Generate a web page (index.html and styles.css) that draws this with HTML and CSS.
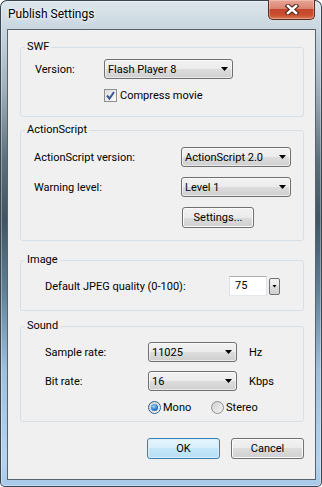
FILE: index.html
```html
<!DOCTYPE html>
<html lang="en">
<head>
    <meta charset="UTF-8">
    <title>Publish Settings</title>
    <link rel="stylesheet" href="styles.css">
</head>
<body>
    <div class="window">
        <!-- Title bar -->
        <div class="titlebar">
            <span class="title">Publish Settings</span>
            <button class="close" aria-label="Close">
                <svg width="14" height="11" viewBox="0 0 14 11">
                    <path d="M3 2 L11 9 M11 2 L3 9" stroke="#4b2218" stroke-width="4.6" stroke-linecap="square" fill="none"/>
                    <path d="M3 2 L11 9 M11 2 L3 9" stroke="#fff" stroke-width="2.6" stroke-linecap="square" fill="none"/>
                </svg>
            </button>
        </div>

        <div class="client">
            <!-- SWF -->
            <fieldset class="group swf">
                <legend>SWF</legend>
                <div class="group-body">
                    <div class="row">
                        <span class="lbl">Version:</span>
                        <div class="combo">Flash Player 8</div>
                    </div>
                    <div class="row check-row">
                        <span class="checkbox">
                            <svg width="11" height="11" viewBox="0 0 11 11">
                                <path d="M2 5.5 L4.5 8.5 L9 2" stroke="#3d5593" stroke-width="2" fill="none"/>
                            </svg>
                        </span>
                        Compress movie
                    </div>
                </div>
            </fieldset>

            <!-- ActionScript -->
            <fieldset class="group as">
                <legend>ActionScript</legend>
                <div class="group-body">
                    <div class="row">
                        <span class="lbl">ActionScript version:</span>
                        <div class="combo">ActionScript 2.0</div>
                    </div>
                    <div class="row">
                        <span class="lbl">Warning level:</span>
                        <div class="combo">Level 1</div>
                    </div>
                    <div class="row">
                        <button class="btn settings">Settings...</button>
                    </div>
                </div>
            </fieldset>

            <!-- Image -->
            <fieldset class="group image">
                <legend>Image</legend>
                <div class="group-body">
                    <div class="row">
                        <span class="lbl">Default JPEG quality (0-100):</span>
                        <div class="field">75</div>
                        <span class="spin"></span>
                    </div>
                </div>
            </fieldset>

            <!-- Sound -->
            <fieldset class="group sound">
                <legend>Sound</legend>
                <div class="group-body">
                    <div class="row">
                        <span class="lbl">Sample rate:</span>
                        <div class="combo">11025</div>
                        <span class="unit">Hz</span>
                    </div>
                    <div class="row">
                        <span class="lbl">Bit rate:</span>
                        <div class="combo">16</div>
                        <span class="unit">Kbps</span>
                    </div>
                    <div class="row radio-row">
                        <span class="option"><span class="radio checked"></span>Mono</span>
                        <span class="option"><span class="radio"></span>Stereo</span>
                    </div>
                </div>
            </fieldset>

            <div class="actions">
                <button class="btn default">OK</button>
                <button class="btn">Cancel</button>
            </div>
        </div>
    </div>
</body>
</html>
```

FILE: styles.css
```css
/* Reset */
* {
    margin: 0;
    padding: 0;
    box-sizing: border-box;
}

body {
    width: 322px;
    height: 487px;
    overflow: hidden;
    font-family: Roboto, "Noto Sans", sans-serif;
    font-size: 11px;
    color: #000;
}

/* Aero frame */
.window {
    width: 322px;
    height: 487px;
    display: flex;
    flex-direction: column;
    border-radius: 7px 7px 5px 5px;
    background: linear-gradient(180deg, #dde6ec 0, #c9d6df 29px, #9fb0bb 90px, #5b707d 160px, #3f5563 220px, #5f7f96 290px, #9ec0de 370px, #b5d3ef 460px, #a9c9e9 487px);
    box-shadow: inset 0 0 0 1px #3b4750, inset 0 0 0 2px rgba(255, 255, 255, 0.35);
}

.titlebar {
    height: 29px;
    display: flex;
    justify-content: space-between;
    align-items: flex-start;
    padding: 0 7px 0 8px;
}

.title {
    margin-top: 6px;
    font-size: 12px;
    line-height: 16px;
    text-shadow: 0 0 6px #fff, 0 0 3px #fff;
}

.close {
    width: 47px;
    height: 20px;
    display: flex;
    align-items: center;
    justify-content: center;
    border: 1px solid #5b2a22;
    border-top: none;
    border-radius: 0 0 5px 5px;
    background: linear-gradient(#e7a696, #d98471 45%, #c4452b 50%, #c9502f 80%, #dc7a55);
    box-shadow: inset 0 0 0 1px rgba(255, 220, 210, 0.4);
}

.client {
    flex: 1;
    margin: 0 6px 7px 7px;
    border: 1px solid #56636d;
    background: #f0f0f0;
}

/* Group boxes */
.group {
    margin: 0 11px 0 12px;
    padding: 0;
    border: 1px solid #d5dfe5;
    border-radius: 3px;
    min-inline-size: 0;
}

.group legend {
    margin-left: 4px;
    padding: 0 2px;
    line-height: 14px;
}

.swf {
    margin-top: 10px;
}

.swf .group-body {
    padding: 5px 0 13px 14px;
}

.as {
    margin-top: 6px;
}

.as .group-body {
    padding: 10px 0 13px 13px;
}

.image {
    margin-top: 12px;
}

.image .group-body {
    padding: 9px 0 14px 24px;
}

.sound {
    margin-top: 8px;
}

.sound .group-body {
    padding: 9px 0 6px 24px;
}

.row {
    display: flex;
    align-items: center;
    height: 20px;
}

.as .row + .row {
    margin-top: 10px;
}

.sound .row + .row {
    margin-top: 9px;
}

.lbl {
    flex: none;
}

.swf .lbl { width: 69px; }
.as .lbl { width: 147px; }
.image .lbl { width: 184px; }
.sound .lbl { width: 103px; }

/* Combo boxes */
.combo {
    height: 20px;
    display: flex;
    align-items: center;
    justify-content: space-between;
    padding: 0 4px 0 3px;
    border: 1px solid #707070;
    border-radius: 3px;
    background: linear-gradient(#f2f2f2, #ebebeb 50%, #dddddd 50%, #cfcfcf);
    box-shadow: inset 0 0 0 1px rgba(255, 255, 255, 0.55);
}

.combo::after {
    content: "";
    width: 7px;
    height: 4px;
    background: #000;
    clip-path: polygon(0 0, 100% 0, 50% 100%);
}

.swf .combo { width: 129px; }
.as .combo { width: 110px; }
.sound .combo { width: 89px; }

.unit {
    margin-left: 12px;
}

/* Checkbox */
.check-row {
    height: 15px;
    margin-top: 9px;
    margin-left: 69px;
}

.checkbox {
    width: 13px;
    height: 13px;
    margin-right: 3px;
    display: flex;
    align-items: center;
    justify-content: center;
    border: 1px solid #8e8f8f;
    background: linear-gradient(135deg, #dcdcdc, #fbfbfb);
}

/* Text field */
.field {
    width: 38px;
    height: 20px;
    padding-left: 5px;
    line-height: 18px;
    background: #fff;
    border: 1px solid;
    border-color: #abadb3 #e2e3ea #e3e9ef #dbdfe6;
}

.spin {
    width: 11px;
    height: 17px;
    margin-left: 2px;
    display: flex;
    align-items: center;
    justify-content: center;
    border: 1px solid #707070;
    border-radius: 2px;
    background: linear-gradient(#f2f2f2, #ebebeb 50%, #dddddd 50%, #cfcfcf);
}

.spin::after {
    content: "";
    width: 5px;
    height: 3px;
    background: #000;
    clip-path: polygon(0 0, 100% 0, 50% 100%);
}

/* Radio buttons */
.radio-row {
    height: 15px;
    margin-left: 103px;
}

.sound .radio-row {
    margin-top: 16px;
}

.option {
    display: flex;
    align-items: center;
    width: 63px;
}

.radio {
    width: 13px;
    height: 13px;
    margin-right: 2px;
    display: flex;
    align-items: center;
    justify-content: center;
    border: 1px solid #8e8f8f;
    border-radius: 50%;
    background: linear-gradient(135deg, #cfcfcf, #f6f6f6);
}

.radio.checked {
    border-color: #2c628b;
}

.radio.checked::after {
    content: "";
    width: 7px;
    height: 7px;
    border-radius: 50%;
    background: radial-gradient(circle at 40% 35%, #a2d5f8, #2a7acb 55%, #0c4a92);
}

/* Push buttons */
.btn {
    width: 73px;
    height: 21px;
    font: inherit;
    color: #000;
    border: 1px solid #707070;
    border-radius: 3px;
    background: linear-gradient(#f2f2f2, #ebebeb 50%, #dddddd 50%, #cfcfcf);
    box-shadow: inset 0 0 0 1px #fbfbfb;
}

.settings {
    width: 72px;
    margin-left: 148px;
}

.btn.default {
    border-color: #3c7fb1;
    background: linear-gradient(#e6f5fd, #d6eefb 50%, #c4e6f8 50%, #b6dff6);
    box-shadow: inset 0 0 0 1px #d8f0fb;
}

.actions {
    display: flex;
    justify-content: flex-end;
    gap: 11px;
    margin-top: 16px;
    padding-right: 11px;
}
```
